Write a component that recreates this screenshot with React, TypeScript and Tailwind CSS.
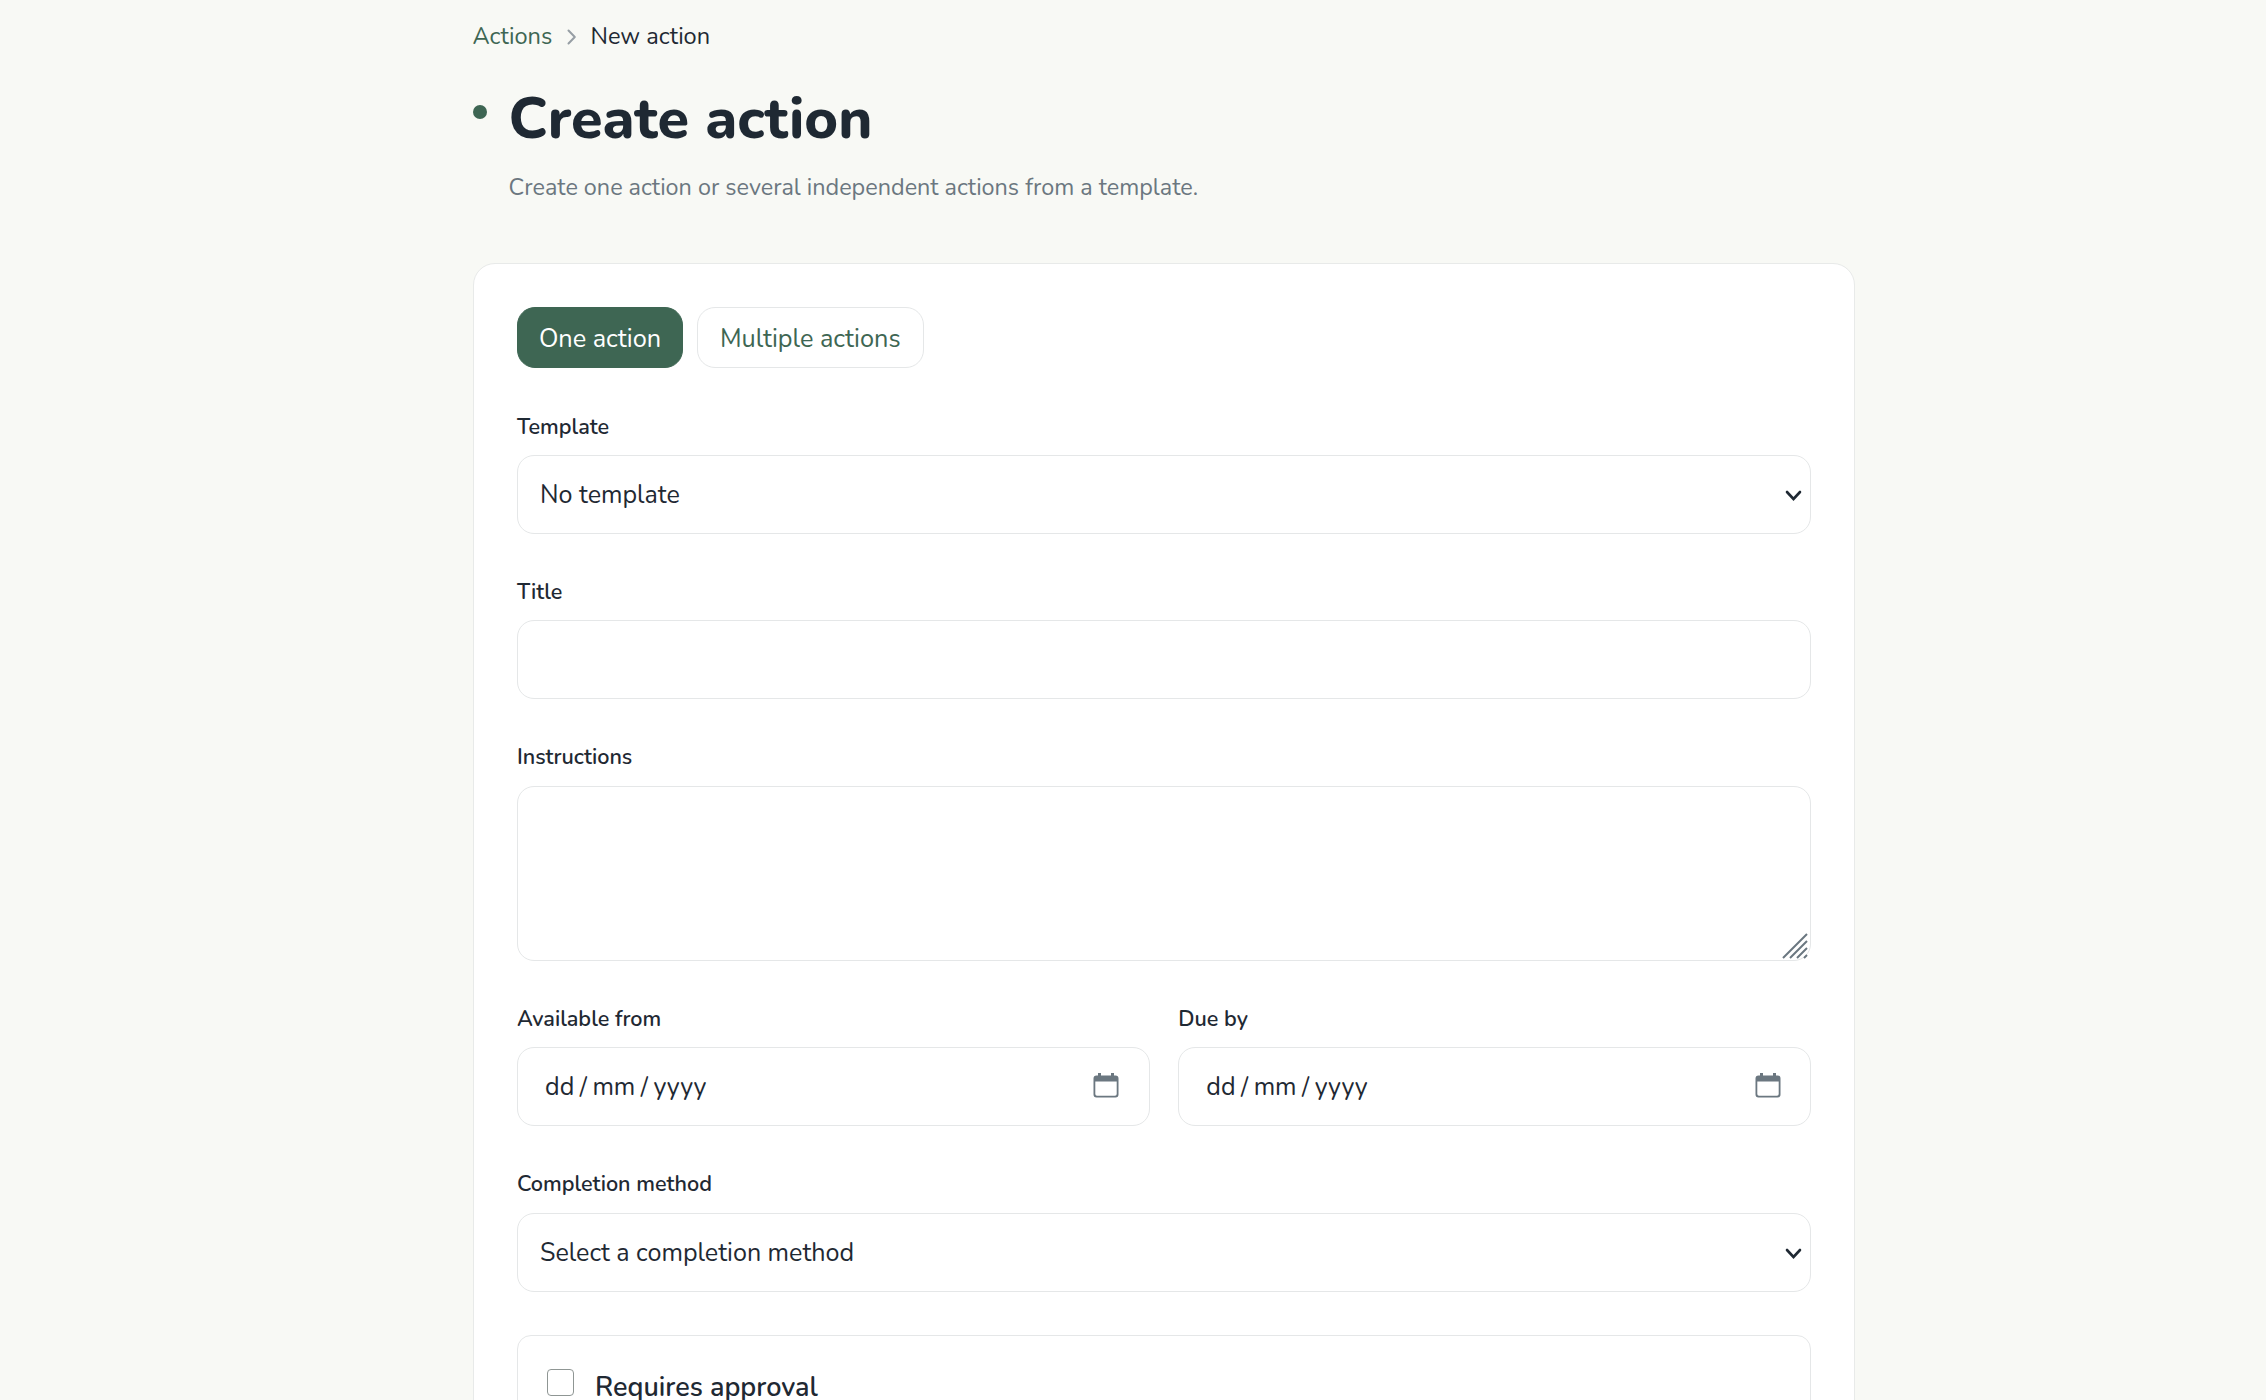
import { useState, type ReactNode } from "react";
import clsx from "clsx";

type Mode = "one" | "multiple";

const BOX = "w-full rounded-[17px] border border-[#e5e7e8] bg-white";

export default function App() {
  const [mode, setMode] = useState<Mode>("one");

  return (
    <div className="h-[1400px] overflow-hidden bg-[#f8f9f5] font-['Nunito','Lato',sans-serif] text-[#1f2933]">
      <main className="ml-[473px] w-[1382px] pt-[20px]">
        <nav className="-ml-[0.5px] flex h-8 items-center text-[23.6px] leading-8">
          <a className="w-[80px] text-[#3e6653]">Actions</a>
          <svg
            viewBox="0 0 12 18"
            className="mt-px mr-[13px] ml-[13px] h-[18px] w-3 fill-none stroke-[#969ea4] stroke-2"
          >
            <path d="M2.5 2.5 8.8 9 2.5 15.5" strokeLinecap="round" strokeLinejoin="round" />
          </svg>
          <span>New action</span>
        </nav>

        <header className="mt-[33px] flex">
          <span className="mt-5 size-3.5 shrink-0 rounded-full bg-[#3e6653]" />
          <div className="ml-[21.5px]">
            <h1 className="text-[57.5px] leading-[68px] font-extrabold">
              Create action
            </h1>
            <p className="mt-[18px] text-[23.4px] leading-8 text-[#6b7780]">
              Create one action or several independent actions from a template.
            </p>
          </div>
        </header>

        <section className="mt-[60px] h-[1300px] rounded-[22px] border border-[#e8eae9] bg-white px-[43px] pt-[43px]">
          <div className="flex gap-3.5">
            <ModeButton
              active={mode === "one"}
              onClick={() => setMode("one")}
              className="w-[166px]"
            >
              One action
            </ModeButton>
            <ModeButton
              active={mode === "multiple"}
              onClick={() => setMode("multiple")}
              className="w-[226.5px]"
            >
              Multiple actions
            </ModeButton>
          </div>

          <div className="mt-[41px] flex flex-col gap-[40.8px]">
            <Field label="Template">
              <SelectBox value="No template" />
            </Field>

            <Field label="Title">
              <input
                type="text"
                className={clsx(BOX, "block h-[79px] px-[22px] text-[25.1px] outline-none")}
              />
            </Field>

            <Field label="Instructions">
              <div className="relative h-[175px]">
                <textarea
                  className={clsx(BOX, "block h-full resize-none px-[22px] py-5 text-[25.1px] outline-none")}
                />
                <ResizeGrip />
              </div>
            </Field>

            <div className="grid grid-cols-2 gap-[28.5px]">
              <Field label="Available from">
                <DateBox />
              </Field>
              <Field label="Due by">
                <DateBox />
              </Field>
            </div>

            <Field label="Completion method">
              <SelectBox value="Select a completion method" />
            </Field>

            <label className="mt-0.5 flex h-[200px] rounded-[14px] border border-[#e5e7e8] pt-[33px] pl-[29px]">
              <input
                type="checkbox"
                className="size-[27px] shrink-0 appearance-none rounded-[4px] border border-[#8f9694] bg-white"
              />
              <span className="mt-px ml-[21px] text-[27px] leading-9 font-semibold">
                Requires approval
              </span>
            </label>
          </div>
        </section>
      </main>
    </div>
  );
}

function ModeButton({
  active,
  onClick,
  className,
  children,
}: {
  active: boolean;
  onClick: () => void;
  className?: string;
  children: ReactNode;
}) {
  return (
    <button
      type="button"
      onClick={onClick}
      className={clsx(
        "h-[61px] rounded-[18px] border pt-[3px] text-center text-[25.3px] whitespace-nowrap",
        active
          ? "border-[#3e6653] bg-[#3e6653] text-white"
          : "border-[#e5e7e8] bg-white text-[#3e6653]",
        className,
      )}
    >
      {children}
    </button>
  );
}

function Field({ label, children }: { label: string; children: ReactNode }) {
  return (
    <div>
      <div className="mb-[12.6px] h-[33px] pt-[1.5px] text-[21.6px] leading-8 font-semibold">
        {label}
      </div>
      {children}
    </div>
  );
}

function SelectBox({ value }: { value: string }) {
  return (
    <div className={clsx(BOX, "flex h-[79.2px] items-center justify-between pr-[8px] pl-[22px]")}>
      <span className="pt-[3px] text-[25.1px]">{value}</span>
      <svg
        viewBox="0 0 17 12"
        className="mt-[3px] h-3 w-[17px] fill-none stroke-[#1f2933] stroke-[2.6]"
      >
        <path d="M2 2 8.5 9 15 2" strokeLinecap="round" />
      </svg>
    </div>
  );
}

function DateBox() {
  return (
    <div className={clsx(BOX, "flex h-[79.2px] items-center justify-between pr-[29.5px] pl-[27px]")}>
      <span className="pt-[2px] text-[25.1px] whitespace-pre">
        dd<span className="mx-[5.5px]">/</span>mm<span className="mx-[5.5px]">/</span>yyyy
      </span>
      <svg viewBox="0 0 26 26" className="-mt-px size-[26px] text-[#6b7780]">
        <path
          d="M5 0h3v2.5h10V0h3v2.5h1.5A3 3 0 0 1 25.5 5.5v16a3 3 0 0 1-3 3h-19a3 3 0 0 1-3-3v-16a3 3 0 0 1 3-3H5zM2.3 8.5v12.5a1.7 1.7 0 0 0 1.7 1.7h18a1.7 1.7 0 0 0 1.7-1.7V8.5z"
          fill="currentColor"
          fillRule="evenodd"
        />
      </svg>
    </div>
  );
}

function ResizeGrip() {
  return (
    <svg
      viewBox="0 0 26 26"
      className="absolute right-[3px] bottom-[2px] size-[26px] fill-none stroke-[#6b7780] stroke-2"
    >
      <path d="M1 25 25 1M8 25 25 8M15 25 25 15M22 25 25 22" />
    </svg>
  );
}
